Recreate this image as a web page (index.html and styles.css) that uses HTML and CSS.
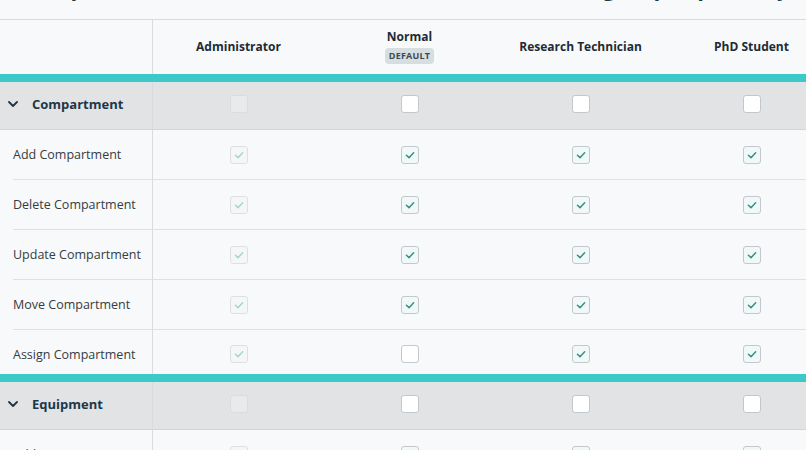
FILE: index.html
```html
<!DOCTYPE html>
<html lang="en">
<head>
<meta charset="utf-8">
<title>Permissions</title>
<link rel="stylesheet" href="styles.css">
</head>
<body>
<div class="page">
  <div class="title"><h1>Set permissions for each of the user roles in this lab group separately</h1></div>
  <div class="matrix">
    <div class="row head">
      <div class="cell label"></div>
      <div class="cell col"><span class="role">Administrator</span></div>
      <div class="cell col stack"><span class="role">Normal</span><span class="badge">DEFAULT</span></div>
      <div class="cell col"><span class="role">Research Technician</span></div>
      <div class="cell col"><span class="role">PhD Student</span></div>
    </div>

    <section class="group">
      <div class="row group-head">
        <div class="cell label"><svg class="chev" viewBox="0 0 10 6" width="10" height="6"><path d="M1 1l4 4 4-4"/></svg><span>Compartment</span></div>
        <div class="cell col"><span class="cb disabled"></span></div>
        <div class="cell col"><span class="cb"></span></div>
        <div class="cell col"><span class="cb"></span></div>
        <div class="cell col"><span class="cb"></span></div>
      </div>
      <div class="row perm">
        <div class="cell label">Add Compartment</div>
        <div class="cell col"><span class="cb checked disabled"><svg viewBox="0 0 18 18"><path d="M5 9.3l2.9 2.7 5.2-5.6"/></svg></span></div>
        <div class="cell col"><span class="cb checked"><svg viewBox="0 0 18 18"><path d="M5 9.3l2.9 2.7 5.2-5.6"/></svg></span></div>
        <div class="cell col"><span class="cb checked"><svg viewBox="0 0 18 18"><path d="M5 9.3l2.9 2.7 5.2-5.6"/></svg></span></div>
        <div class="cell col"><span class="cb checked"><svg viewBox="0 0 18 18"><path d="M5 9.3l2.9 2.7 5.2-5.6"/></svg></span></div>
      </div>
      <div class="row perm">
        <div class="cell label">Delete Compartment</div>
        <div class="cell col"><span class="cb checked disabled"><svg viewBox="0 0 18 18"><path d="M5 9.3l2.9 2.7 5.2-5.6"/></svg></span></div>
        <div class="cell col"><span class="cb checked"><svg viewBox="0 0 18 18"><path d="M5 9.3l2.9 2.7 5.2-5.6"/></svg></span></div>
        <div class="cell col"><span class="cb checked"><svg viewBox="0 0 18 18"><path d="M5 9.3l2.9 2.7 5.2-5.6"/></svg></span></div>
        <div class="cell col"><span class="cb checked"><svg viewBox="0 0 18 18"><path d="M5 9.3l2.9 2.7 5.2-5.6"/></svg></span></div>
      </div>
      <div class="row perm">
        <div class="cell label">Update Compartment</div>
        <div class="cell col"><span class="cb checked disabled"><svg viewBox="0 0 18 18"><path d="M5 9.3l2.9 2.7 5.2-5.6"/></svg></span></div>
        <div class="cell col"><span class="cb checked"><svg viewBox="0 0 18 18"><path d="M5 9.3l2.9 2.7 5.2-5.6"/></svg></span></div>
        <div class="cell col"><span class="cb checked"><svg viewBox="0 0 18 18"><path d="M5 9.3l2.9 2.7 5.2-5.6"/></svg></span></div>
        <div class="cell col"><span class="cb checked"><svg viewBox="0 0 18 18"><path d="M5 9.3l2.9 2.7 5.2-5.6"/></svg></span></div>
      </div>
      <div class="row perm">
        <div class="cell label">Move Compartment</div>
        <div class="cell col"><span class="cb checked disabled"><svg viewBox="0 0 18 18"><path d="M5 9.3l2.9 2.7 5.2-5.6"/></svg></span></div>
        <div class="cell col"><span class="cb checked"><svg viewBox="0 0 18 18"><path d="M5 9.3l2.9 2.7 5.2-5.6"/></svg></span></div>
        <div class="cell col"><span class="cb checked"><svg viewBox="0 0 18 18"><path d="M5 9.3l2.9 2.7 5.2-5.6"/></svg></span></div>
        <div class="cell col"><span class="cb checked"><svg viewBox="0 0 18 18"><path d="M5 9.3l2.9 2.7 5.2-5.6"/></svg></span></div>
      </div>
      <div class="row perm last">
        <div class="cell label">Assign Compartment</div>
        <div class="cell col"><span class="cb checked disabled"><svg viewBox="0 0 18 18"><path d="M5 9.3l2.9 2.7 5.2-5.6"/></svg></span></div>
        <div class="cell col"><span class="cb"></span></div>
        <div class="cell col"><span class="cb checked"><svg viewBox="0 0 18 18"><path d="M5 9.3l2.9 2.7 5.2-5.6"/></svg></span></div>
        <div class="cell col"><span class="cb checked"><svg viewBox="0 0 18 18"><path d="M5 9.3l2.9 2.7 5.2-5.6"/></svg></span></div>
      </div>
    </section>

    <section class="group">
      <div class="row group-head">
        <div class="cell label"><svg class="chev" viewBox="0 0 10 6" width="10" height="6"><path d="M1 1l4 4 4-4"/></svg><span>Equipment</span></div>
        <div class="cell col"><span class="cb disabled"></span></div>
        <div class="cell col"><span class="cb"></span></div>
        <div class="cell col"><span class="cb"></span></div>
        <div class="cell col"><span class="cb"></span></div>
      </div>
      <div class="row perm">
        <div class="cell label">Add Equipment</div>
        <div class="cell col"><span class="cb checked disabled"><svg viewBox="0 0 18 18"><path d="M5 9.3l2.9 2.7 5.2-5.6"/></svg></span></div>
        <div class="cell col"><span class="cb checked"><svg viewBox="0 0 18 18"><path d="M5 9.3l2.9 2.7 5.2-5.6"/></svg></span></div>
        <div class="cell col"><span class="cb checked"><svg viewBox="0 0 18 18"><path d="M5 9.3l2.9 2.7 5.2-5.6"/></svg></span></div>
        <div class="cell col"><span class="cb checked"><svg viewBox="0 0 18 18"><path d="M5 9.3l2.9 2.7 5.2-5.6"/></svg></span></div>
      </div>
    </section>
  </div>
</div>
</body>
</html>
```

FILE: styles.css
```css
html, body {
  margin: 0;
  padding: 0;
  background: #f7f9fa;
  overflow: hidden;
}
body {
  font-family: "Open Sans", "Noto Sans", sans-serif;
  color: #333a40;
}
.page {
  width: 838px;
}
.title {
  height: 19px;
  overflow: hidden;
}
.title h1 {
  margin: -25px 0 0 0;
  padding-left: 30px;
  font-size: 22px;
  line-height: 24px;
  font-weight: 700;
  color: #1f3d3c;
  white-space: nowrap;
}
.matrix {
  border-top: 1px solid #d8dcdf;
}
.row {
  display: grid;
  grid-template-columns: 153px repeat(4, 171px);
}
.cell {
  display: flex;
  align-items: center;
}
.col {
  justify-content: center;
}
.label {
  border-right: 1px solid #d8dcdf;
}
.head {
  height: 54px;
}
.stack {
  flex-direction: column;
  justify-content: center;
  gap: 3px;
  padding-bottom: 1px;
}
.role {
  font-size: 12px;
  font-weight: 700;
  color: #1e2b35;
  line-height: 16px;
}
.badge {
  font-size: 9px;
  font-weight: 700;
  letter-spacing: 0.2px;
  line-height: 12px;
  padding: 2px 4px;
  border-radius: 4px;
  background: #d6dee1;
  color: #3b4b54;
}
.group {
  border-top: 8px solid #3bc9ca;
}
.group-head {
  height: 48px;
  background: #e1e3e5;
  border-bottom: 1px solid #d3d6d9;
  box-sizing: border-box;
}
.group-head .cell {
  padding-bottom: 4px;
}
.group-head .label {
  padding-left: 8px;
  gap: 14px;
  font-size: 13px;
  font-weight: 700;
  color: #1d3748;
}
.chev {
  fill: none;
  stroke: #1d3748;
  stroke-width: 1.8;
  stroke-linecap: round;
  stroke-linejoin: round;
}
.perm {
  height: 50px;
}
.perm .cell {
  border-bottom: 1px solid #dfe2e4;
}
.perm .label {
  margin-left: 13px;
  font-size: 12.5px;
  color: #363c42;
}
.perm.last {
  height: 44px;
}
.perm.last .cell {
  border-bottom: none;
  padding-top: 4px;
}
.cb {
  width: 18px;
  height: 18px;
  box-sizing: border-box;
  border: 1px solid #c3c8cc;
  border-radius: 3px;
  background: #ffffff;
  display: flex;
}
.cb svg {
  width: 16px;
  height: 16px;
  fill: none;
  stroke: #3a8f88;
  stroke-width: 1.7;
  stroke-linecap: round;
  stroke-linejoin: round;
}
.cb.checked {
  background: #f0f9f8;
}
.cb.disabled {
  border-color: #dde0e2;
  background: #f4f6f7;
}
.group-head .cb.disabled {
  background: #e8eaeb;
  border-color: #dadddf;
}
.cb.checked.disabled svg {
  stroke: #a6d6cf;
}
```
